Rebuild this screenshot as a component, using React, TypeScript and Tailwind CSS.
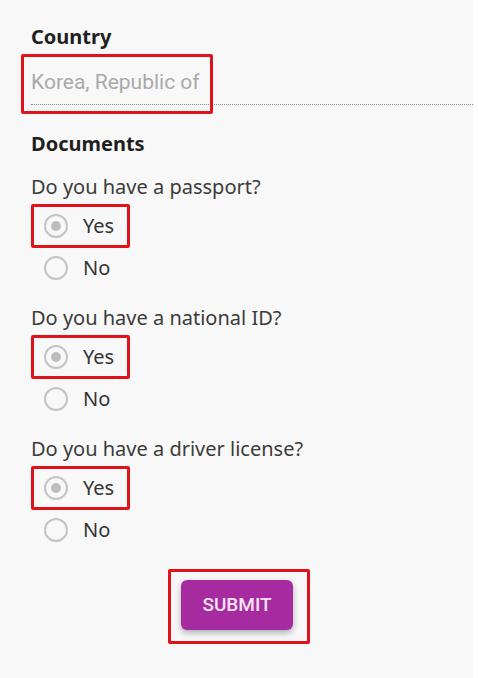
const questions = [
  'Do you have a passport?',
  'Do you have a national ID?',
  'Do you have a driver license?',
]

function Radio({ checked }: { checked?: boolean }) {
  return (
    <span className="flex h-[24px] w-[24px] items-center justify-center rounded-full border-2 border-[#c4c4c4]">
      {checked && <span className="h-[10px] w-[10px] rounded-full bg-[#bdbdbd]" />}
    </span>
  )
}

function Question({ text, first }: { text: string; first?: boolean }) {
  return (
    <div className={first ? 'mt-[19px]' : 'mt-[26px]'}>
      <p className="text-[20px] leading-[24px] text-[#3b3b3b]">{text}</p>
      <div className="relative mt-[15px] flex items-center gap-[15px] pl-[13px] text-[20px] leading-[24px] text-[#333]">
        <Radio checked />
        <span>Yes</span>
        <div className="absolute left-0 top-[-10px] h-[44px] w-[99px] rounded-[2px] border-[3px] border-[#e0131b]" />
      </div>
      <div className="mt-[18px] flex items-center gap-[15px] pl-[13px] text-[20px] leading-[24px] text-[#333]">
        <Radio />
        <span>No</span>
      </div>
    </div>
  )
}

export default function App() {
  return (
    <div className="h-[678px] w-[478px] bg-white font-['Noto_Sans',sans-serif]">
      <div className="h-full w-[473px] bg-[#f8f8f8] pt-[25px]">
        <div className="pl-[31px]">
          <h2 className="text-[20px] font-bold leading-[24px] text-[#1f1f1f]">Country</h2>
          <div className="relative mt-[12px] border-b border-dotted border-[#8a8a8a] pb-[9px] pt-[9px]">
            <span className="font-['Roboto',sans-serif] text-[21px] leading-[24px] text-[#a9a9a9]">
              Korea, Republic of
            </span>
            <div className="absolute left-[-10px] top-[-7px] h-[60px] w-[192px] rounded-[2px] border-[3px] border-[#e0131b]" />
          </div>

          <h2 className="mt-[27px] text-[20px] font-bold leading-[24px] text-[#1f1f1f]">Documents</h2>
          {questions.map((q, i) => (
            <Question key={q} text={q} first={i === 0} />
          ))}
        </div>

        <div className="mt-[38px] flex justify-center pl-[1px]">
          <div className="relative">
            <button className="h-[50px] w-[112px] rounded-[6px] bg-[#a72ba0] font-['Roboto',sans-serif] text-[19px] font-medium text-[#f6e4f3] shadow-[0_3px_6px_rgba(0,0,0,0.3)]">
              SUBMIT
            </button>
            <div className="absolute left-[-13px] top-[-11px] h-[75px] w-[142px] rounded-[2px] border-[3px] border-[#e0131b]" />
          </div>
        </div>
      </div>
    </div>
  )
}
